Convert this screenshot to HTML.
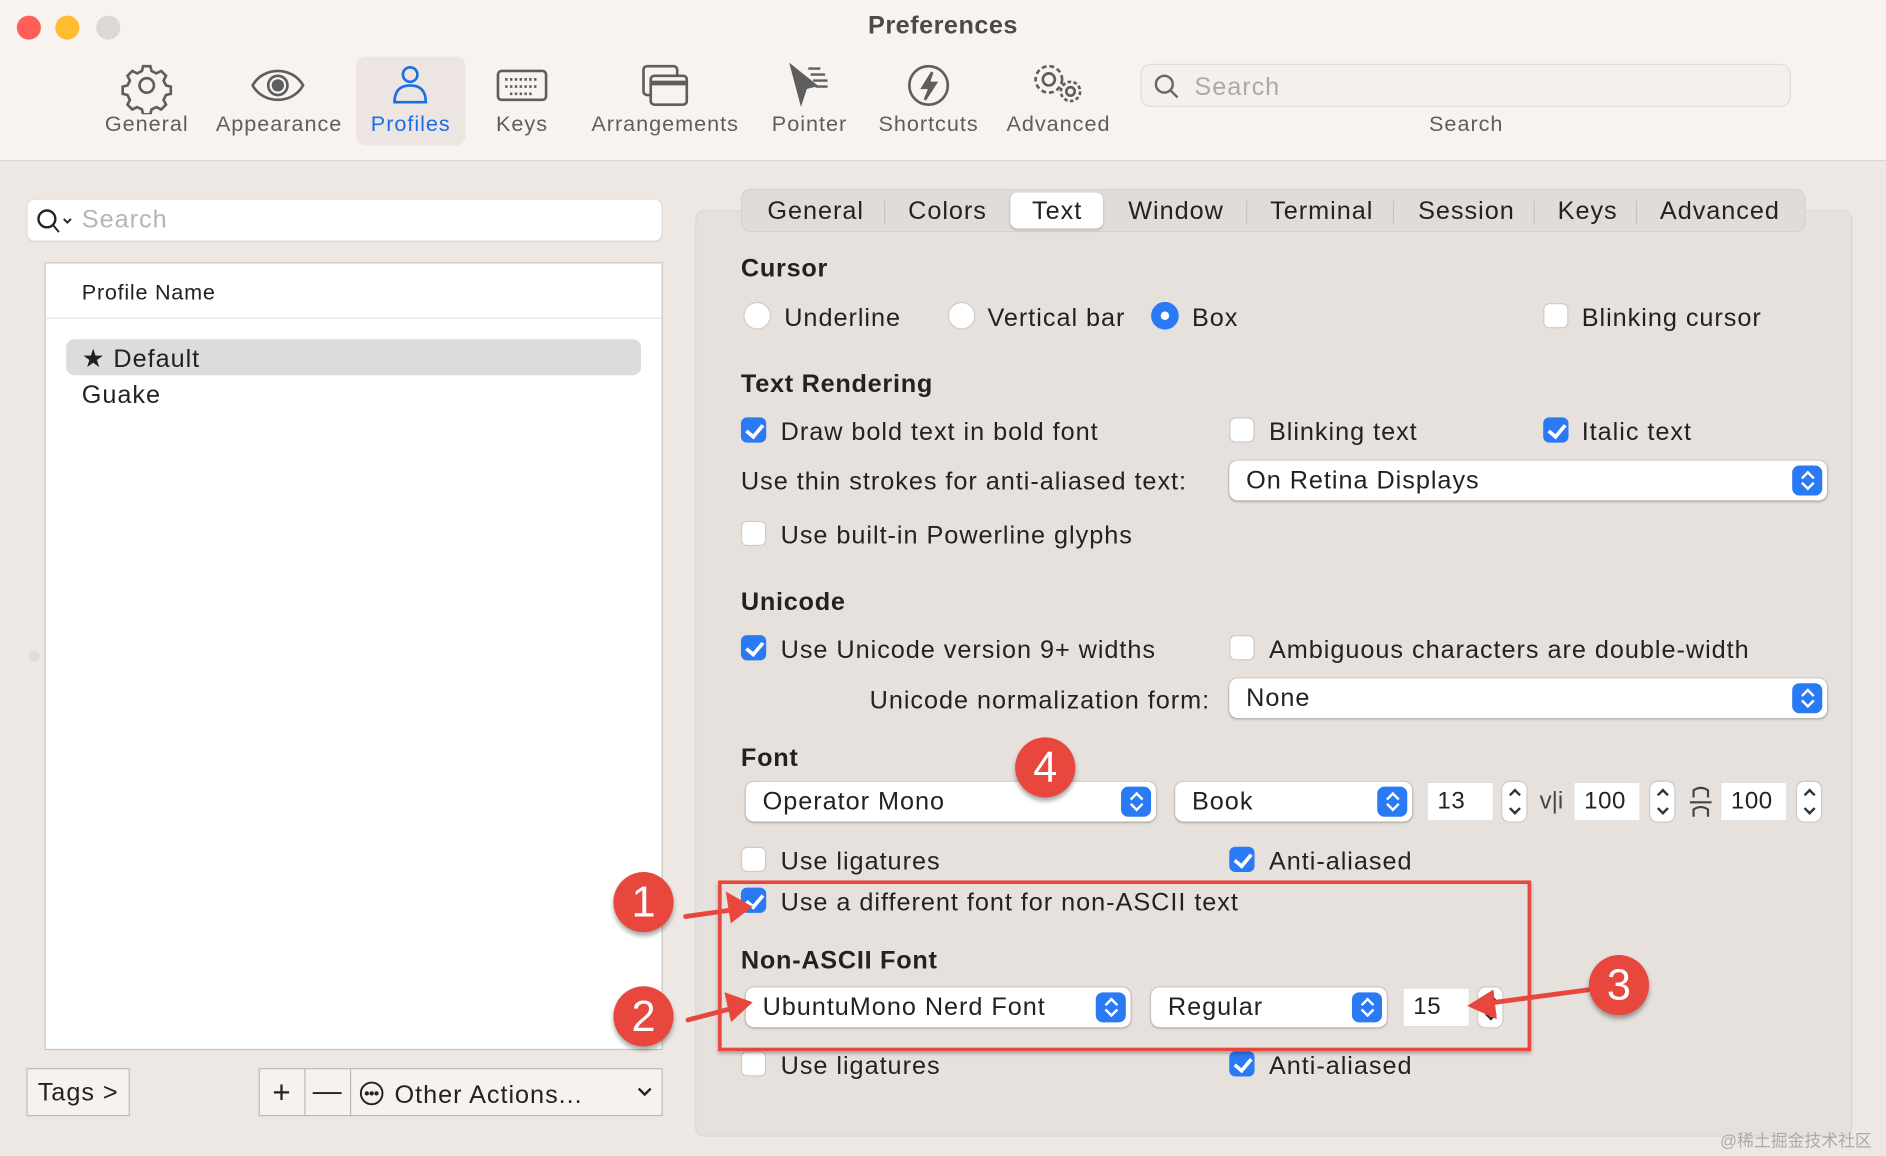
<!DOCTYPE html>
<html><head><meta charset="utf-8"><style>
html,body{margin:0;padding:0;width:1886px;height:1156px;overflow:hidden;background:#ede7e3}
#w{position:absolute;left:0;top:0;width:1568px;height:961px;transform:scale(1.20281);transform-origin:0 0;background:#eee8e4;font-family:"Liberation Sans",sans-serif;color:#222;overflow:hidden}
.a{position:absolute;white-space:nowrap}
.t{position:absolute;white-space:nowrap;font-size:21px;line-height:24px;color:#222;letter-spacing:0.8px;margin-top:1.5px}
.h{position:absolute;white-space:nowrap;font-size:21px;font-weight:bold;line-height:24px;color:#222;letter-spacing:0.6px;margin-top:1.5px}
.cb{position:absolute;width:21px;height:21px;border-radius:5px;background:#fff;border:1px solid #d0cbc8;box-sizing:border-box}
.cb.on{background:#2a7af5;border-color:#2a7af5}
.cb.on:after{content:"";position:absolute;left:6px;top:2px;width:6px;height:11px;border:solid #fff;border-width:0 3px 3px 0;transform:rotate(40deg)}
.rd{position:absolute;width:23px;height:23px;border-radius:50%;background:#fff;border:1px solid #d0cbc8;box-sizing:border-box}
.rd.on{background:#2a7af5;border-color:#2a7af5}
.rd.on:after{content:"";position:absolute;left:7px;top:7px;width:7px;height:7px;border-radius:50%;background:#fff}
.pop{position:absolute;height:33px;background:#fff;border-radius:7px;box-shadow:0 0 0 1px rgba(0,0,0,.08),0 1px 2px rgba(0,0,0,.2);font-size:21px;line-height:33px;padding-left:14px;box-sizing:border-box;color:#222;letter-spacing:0.8px}
.pop .b{position:absolute;right:4px;top:4px;width:25px;height:25px;border-radius:6px;background:#2a7af5}
.pop .b:before,.pop .b:after{content:"";position:absolute;left:9px;width:6px;height:6px;border:solid #fff;border-width:2px 0 0 2px}
.pop .b:before{top:6px;transform:rotate(45deg)}
.pop .b:after{top:11px;transform:rotate(225deg)}
.fld{position:absolute;height:33px;background:#fff;border:1px solid #ddd;box-sizing:border-box;font-size:20px;line-height:31px;padding-left:8px;letter-spacing:0.5px}
.stp{position:absolute;width:20px;height:33px;border-radius:6px;background:#fff;box-shadow:0 0 0 1px rgba(0,0,0,.1)}
.stp:before,.stp:after{content:"";position:absolute;left:7px;width:5px;height:5px;border:solid #333;border-width:2px 0 0 2px}
.stp:before{top:7px;transform:rotate(45deg)}
.stp:after{top:19px;transform:rotate(225deg)}
.tb{position:absolute;font-size:18px;color:#5e5e5e;text-align:center;white-space:nowrap;letter-spacing:0.8px;margin-top:1px}
.badge{position:absolute;width:50px;height:50px;border-radius:50%;background:#e8473d;color:#fff;font-size:36px;text-align:center;line-height:50px;box-shadow:0 3px 4px rgba(0,0,0,.35)}
</style></head><body><div id="w">
<div class="a" style="left:0;top:0;width:1568px;height:133px;background:#f9f3ef;border-bottom:1px solid #dcd6d2"></div>
<div class="a" style="left:14px;top:13px;width:20px;height:20px;border-radius:50%;background:#fe5f57"></div>
<div class="a" style="left:46px;top:13px;width:20px;height:20px;border-radius:50%;background:#febc2e"></div>
<div class="a" style="left:80px;top:13px;width:20px;height:20px;border-radius:50%;background:#dcd8d5"></div>
<div class="a" style="left:0;top:10px;width:1568px;text-align:center;font-size:21px;font-weight:bold;color:#4a4a4a;letter-spacing:0.4px">Preferences</div>
<div class="a" style="left:296px;top:47px;width:91px;height:74px;border-radius:8px;background:#ede5e1"></div>
<svg class="a" style="left:0;top:50px" width="940" height="45" fill="none" stroke="#5e5e5e" stroke-width="2.2">
<g transform="translate(122,21)"><circle r="6"/><path d="M-3,-16h6l1,4 4,2 4-2 4,4-2,4 2,4 4,1v6l-4,1-2,4 2,4-4,4-4-2-4,2-1,4h-6l-1-4-4-2-4,2-4-4 2-4-2-4-4-1v-6l4-1 2-4-2-4 4-4 4,2 4-2z"/></g>
<g transform="translate(231,21)"><path d="M-21,0C-12,-16 12,-16 21,0C12,16 -12,16 -21,0z"/><circle r="8"/><circle r="4" fill="#5e5e5e"/></g>
<g transform="translate(341,21)" stroke="#1a6fe6"><circle cy="-9" r="6"/><path d="M-13,14c0-10 5-14 13-14s13,4 13,14z"/></g>
<g transform="translate(434,21)"><rect x="-20" y="-12" width="40" height="24" rx="3"/><path d="M-14,-5h28M-14,1h28M-10,7h20" stroke-dasharray="2 2"/></g>
<g transform="translate(553,21)"><rect x="-18" y="-16" width="28" height="24" rx="3"/><rect x="-12" y="-8" width="30" height="24" rx="3" fill="#f9f3ef"/><path d="M-12,-2h30" stroke-width="4"/></g>
<g transform="translate(672,21)" fill="#5e5e5e"><path d="M-14,-16l8,30 4-12 8-2z"/><path d="M0,-14h10M2,-9h12M4,-4h12M6,1h10" stroke-width="2"/></g>
<g transform="translate(772,21)"><circle r="16"/><path d="M3,-11l-8,13h6l-4,10 9-14h-6z" fill="#5e5e5e"/></g>
<g transform="translate(872,16)"><circle r="5"/><circle r="11" stroke-dasharray="4 2.5"/><g transform="translate(18,10)"><circle r="3.5"/><circle r="8" stroke-dasharray="3 2"/></g></g>
</svg>
<div class="tb" style="left:80px;top:92px;width:84px">General</div>
<div class="tb" style="left:176px;top:92px;width:112px">Appearance</div>
<div class="tb" style="left:296px;top:92px;width:91px;color:#1a6fe6">Profiles</div>
<div class="tb" style="left:400px;top:92px;width:68px">Keys</div>
<div class="tb" style="left:488px;top:92px;width:130px">Arrangements</div>
<div class="tb" style="left:636px;top:92px;width:74px">Pointer</div>
<div class="tb" style="left:726px;top:92px;width:92px">Shortcuts</div>
<div class="tb" style="left:834px;top:92px;width:92px">Advanced</div>
<div class="a" style="left:949px;top:54px;width:539px;height:34px;border-radius:8px;background:#f6f0ec;box-shadow:0 0 0 1px #e2dcd8"></div>
<svg class="a" style="left:958px;top:60px" width="24" height="24" fill="none" stroke="#666" stroke-width="2"><circle cx="10" cy="10" r="7"/><path d="M15,15l6,6"/></svg>
<div class="a" style="left:993px;top:61px;font-size:21px;color:#aaa;letter-spacing:0.8px">Search</div>
<div class="tb" style="left:1150px;top:92px;width:138px">Search</div>

<div class="a" style="left:23px;top:166px;width:527px;height:34px;background:#fff;border-radius:6px;box-shadow:0 0 0 1px #ddd,0 1px 1px rgba(0,0,0,.15)"></div>
<svg class="a" style="left:29px;top:172px" width="34" height="24" fill="none" stroke="#222" stroke-width="2"><circle cx="10" cy="10" r="7"/><path d="M15,15l5,6M24,10l3,3 3-3" stroke-width="1.6"/></svg>
<div class="a" style="left:68px;top:171px;font-size:21px;color:#b5b5b5;letter-spacing:0.8px">Search</div>
<div class="a" style="left:37px;top:218px;width:514px;height:655px;background:#fff;border:1px solid #c9c4c0;box-sizing:border-box"></div>
<div class="a" style="left:38px;top:264px;width:512px;height:1px;background:#e2e2e2"></div>
<div class="a" style="left:68px;top:233px;font-size:18px;color:#222;letter-spacing:0.6px">Profile Name</div>
<div class="a" style="left:55px;top:282px;width:478px;height:30px;border-radius:7px;background:#dcdcdc"></div>
<div class="t" style="left:68px;top:285px">★ Default</div>
<div class="t" style="left:68px;top:315px">Guake</div>
<div class="a" style="left:24px;top:541px;width:9px;height:9px;border-radius:50%;background:#ddd"></div>
<div class="a" style="left:22px;top:888px;width:86px;height:40px;background:#f6f2ef;border:1px solid #bbb;box-sizing:border-box;font-size:21px;line-height:40px;text-align:center;letter-spacing:0.8px">Tags &gt;</div>
<div class="a" style="left:215px;top:888px;width:336px;height:40px;background:#f6f2ef;border:1px solid #bbb;box-sizing:border-box"></div>
<div class="a" style="left:253px;top:888px;width:1px;height:40px;background:#bbb"></div>
<div class="a" style="left:291px;top:888px;width:1px;height:40px;background:#bbb"></div>
<div class="a" style="left:215px;top:893px;width:38px;text-align:center;font-size:26px;line-height:30px">+</div>
<div class="a" style="left:253px;top:893px;width:38px;text-align:center;font-size:24px;line-height:30px">—</div>
<svg class="a" style="left:298px;top:898px" width="22" height="22" fill="none" stroke="#222" stroke-width="1.6"><circle cx="11" cy="11" r="9"/><circle cx="7" cy="11" r="1" fill="#222"/><circle cx="11" cy="11" r="1" fill="#222"/><circle cx="15" cy="11" r="1" fill="#222"/></svg>
<div class="t" style="left:328px;top:897px">Other Actions...</div>
<svg class="a" style="left:529px;top:903px" width="14" height="10" fill="none" stroke="#222" stroke-width="2"><path d="M2,2l5,5 5-5"/></svg>

<div class="a" style="left:578px;top:175px;width:962px;height:770px;background:#e7e1dd;border:1px solid #ddd7d3;border-radius:7px;box-sizing:border-box"></div>
<div class="a" style="left:617px;top:158px;width:883px;height:34px;background:#e2dcd8;border-radius:7px;box-shadow:0 0 0 1px #d8d2ce"></div>
<div class="a" style="left:840px;top:160px;width:77px;height:30px;background:#fff;border-radius:6px;box-shadow:0 1px 2px rgba(0,0,0,.2)"></div>
<div class="a" style="left:617px;top:164px;font-size:21px;line-height:24px;color:#222;letter-spacing:0.8px">
<span class="a" style="left:21px">General</span><span class="a" style="left:138px">Colors</span><span class="a" style="left:241px">Text</span><span class="a" style="left:321px">Window</span><span class="a" style="left:439px">Terminal</span><span class="a" style="left:562px">Session</span><span class="a" style="left:678px">Keys</span><span class="a" style="left:763px">Advanced</span>
<span class="a" style="left:118px;top:3px;width:1px;height:19px;background:#c8c2be"></span><span class="a" style="left:419px;top:3px;width:1px;height:19px;background:#c8c2be"></span><span class="a" style="left:541px;top:3px;width:1px;height:19px;background:#c8c2be"></span><span class="a" style="left:658px;top:3px;width:1px;height:19px;background:#c8c2be"></span><span class="a" style="left:743px;top:3px;width:1px;height:19px;background:#c8c2be"></span>
</div>

<div class="h" style="left:616px;top:210px">Cursor</div>
<div class="rd" style="left:618px;top:251px"></div><div class="t" style="left:652px;top:251px">Underline</div>
<div class="rd" style="left:788px;top:251px"></div><div class="t" style="left:821px;top:251px">Vertical bar</div>
<div class="rd on" style="left:957px;top:251px"></div><div class="t" style="left:991px;top:251px">Box</div>
<div class="cb" style="left:1283px;top:252px"></div><div class="t" style="left:1315px;top:251px">Blinking cursor</div>

<div class="h" style="left:616px;top:306px">Text Rendering</div>
<div class="cb on" style="left:616px;top:347px"></div><div class="t" style="left:649px;top:346px">Draw bold text in bold font</div>
<div class="cb" style="left:1022px;top:347px"></div><div class="t" style="left:1055px;top:346px">Blinking text</div>
<div class="cb on" style="left:1283px;top:347px"></div><div class="t" style="left:1315px;top:346px">Italic text</div>
<div class="t" style="left:616px;top:387px">Use thin strokes for anti-aliased text:</div>
<div class="pop" style="left:1022px;top:383px;width:497px">On Retina Displays<span class="b"></span></div>
<div class="cb" style="left:616px;top:433px"></div><div class="t" style="left:649px;top:432px">Use built-in Powerline glyphs</div>

<div class="h" style="left:616px;top:487px">Unicode</div>
<div class="cb on" style="left:616px;top:528px"></div><div class="t" style="left:649px;top:527px">Use Unicode version 9+ widths</div>
<div class="cb" style="left:1022px;top:528px"></div><div class="t" style="left:1055px;top:527px">Ambiguous characters are double-width</div>
<div class="t" style="left:723px;top:569px">Unicode normalization form:</div>
<div class="pop" style="left:1022px;top:564px;width:497px">None<span class="b"></span></div>

<div class="h" style="left:616px;top:617px">Font</div>
<div class="pop" style="left:620px;top:650px;width:341px">Operator Mono<span class="b"></span></div>
<div class="pop" style="left:977px;top:650px;width:197px">Book<span class="b"></span></div>
<div class="fld" style="left:1186px;top:650px;width:56px">13</div>
<div class="stp" style="left:1249px;top:650px"></div>
<div class="a" style="left:1280px;top:655px;font-size:20px;color:#444">v|i</div>
<div class="fld" style="left:1308px;top:650px;width:56px">100</div>
<div class="stp" style="left:1372px;top:650px"></div>
<svg class="a" style="left:1402px;top:652px" width="24" height="30" fill="none" stroke="#444" stroke-width="1.8"><path d="M6,11v-6q6-4 12,0v6M3,15h18M6,27v-6q6-4 12,0v6"/></svg>
<div class="fld" style="left:1430px;top:650px;width:56px">100</div>
<div class="stp" style="left:1494px;top:650px"></div>

<div class="cb" style="left:616px;top:704px"></div><div class="t" style="left:649px;top:703px">Use ligatures</div>
<div class="cb on" style="left:1022px;top:704px"></div><div class="t" style="left:1055px;top:703px">Anti-aliased</div>
<div class="cb on" style="left:616px;top:738px"></div><div class="t" style="left:649px;top:737px">Use a different font for non-ASCII text</div>
<div class="h" style="left:616px;top:785px">Non-ASCII Font</div>
<div class="pop" style="left:620px;top:821px;width:320px">UbuntuMono Nerd Font<span class="b"></span></div>
<div class="pop" style="left:957px;top:821px;width:196px">Regular<span class="b"></span></div>
<div class="fld" style="left:1166px;top:821px;width:56px">15</div>
<div class="stp" style="left:1229px;top:821px"></div>
<div class="cb" style="left:616px;top:874px"></div><div class="t" style="left:649px;top:873px">Use ligatures</div>
<div class="cb on" style="left:1022px;top:874px"></div><div class="t" style="left:1055px;top:873px">Anti-aliased</div>

<div class="a" style="left:597px;top:732px;width:676px;height:142px;border:3px solid #e8473d;box-sizing:border-box;box-shadow:0 2px 3px rgba(0,0,0,.3)"></div>
<svg class="a" style="left:560px;top:730px" width="820" height="130" fill="#e8473d" stroke="#e8473d" stroke-width="4" stroke-linecap="round">
<path d="M10,32L52,26"/><path d="M62,24l-16-9 3,19z"/>
<path d="M12,118L50,108"/><path d="M62,104l-17-6 4,18z"/>
<path d="M760,93L678,104"/><path d="M664,106l16,-10 2,18z"/>
</svg>
<div class="badge" style="left:510px;top:725px">1</div>
<div class="badge" style="left:510px;top:820px">2</div>
<div class="badge" style="left:1321px;top:794px">3</div>
<div class="badge" style="left:844px;top:613px">4</div>
<div class="a" style="left:1430px;top:938px;font-size:14px;color:#aaa;font-family:'Liberation Sans','Noto Sans CJK SC',sans-serif">@稀土掘金技术社区</div>
</div></body></html>
